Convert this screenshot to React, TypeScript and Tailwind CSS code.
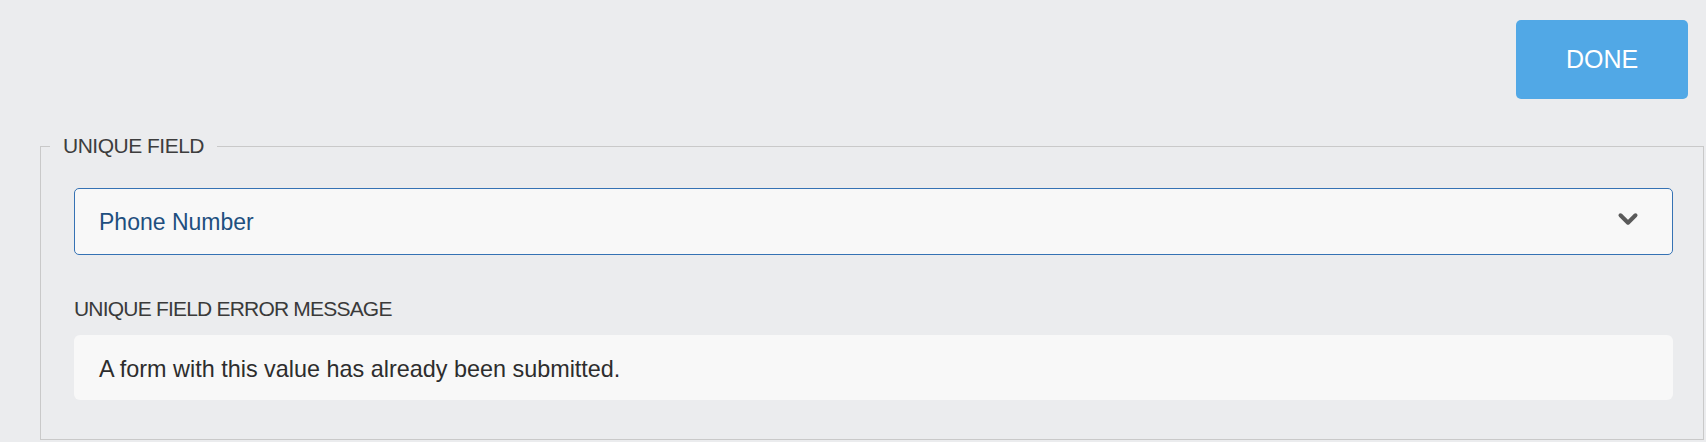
import { ChevronDown } from 'lucide-react';

export default function App() {
  return (
    <div className="min-h-[442px] bg-[#ebecee] font-['Liberation_Sans',Arial,sans-serif] overflow-hidden">
      {/* Top bar */}
      <div className="flex justify-end pt-[20px] pr-[18px]">
        <button className="w-[172px] h-[79px] rounded-[5px] bg-[#51a8e6] text-white text-[25px] leading-none">DONE</button>
      </div>

      {/* Unique field settings */}
      <fieldset className="ml-[40px] mr-[2px] mt-[35px] border border-[#c9c9c9] p-0 min-w-0">
        <legend className="ml-[9px] px-[13px] text-[21px] leading-[24px] tracking-[-0.5px] text-[#3d3d3d]">UNIQUE FIELD</legend>
        <div className="pt-[30px] pl-[33px] pr-[30px] pb-[39px]">
          <div className="flex items-center justify-between h-[67px] rounded-[5px] border-[1.5px] border-[#3572b4] bg-[#f8f8f8] pl-[24px] pr-[29px]">
            <span className="text-[23px] leading-[28px] text-[#1e4f7f]">Phone Number</span>
            <ChevronDown className="w-[30px] h-[30px] mb-[6px] text-[#5a5a5a]" strokeWidth={3.2} />
          </div>

          <div className="mt-[42px] text-[21px] leading-[24px] tracking-[-0.8px] text-[#3a3a3a]">UNIQUE FIELD ERROR MESSAGE</div>
          <div className="mt-[14px] rounded-[6px] bg-[#f8f8f8] pl-[25px] pt-[20px] pb-[17px] text-[23.4px] leading-[28px] text-[#2d2d2d]">
            A form with this value has already been submitted.
          </div>
        </div>
      </fieldset>
    </div>
  );
}
